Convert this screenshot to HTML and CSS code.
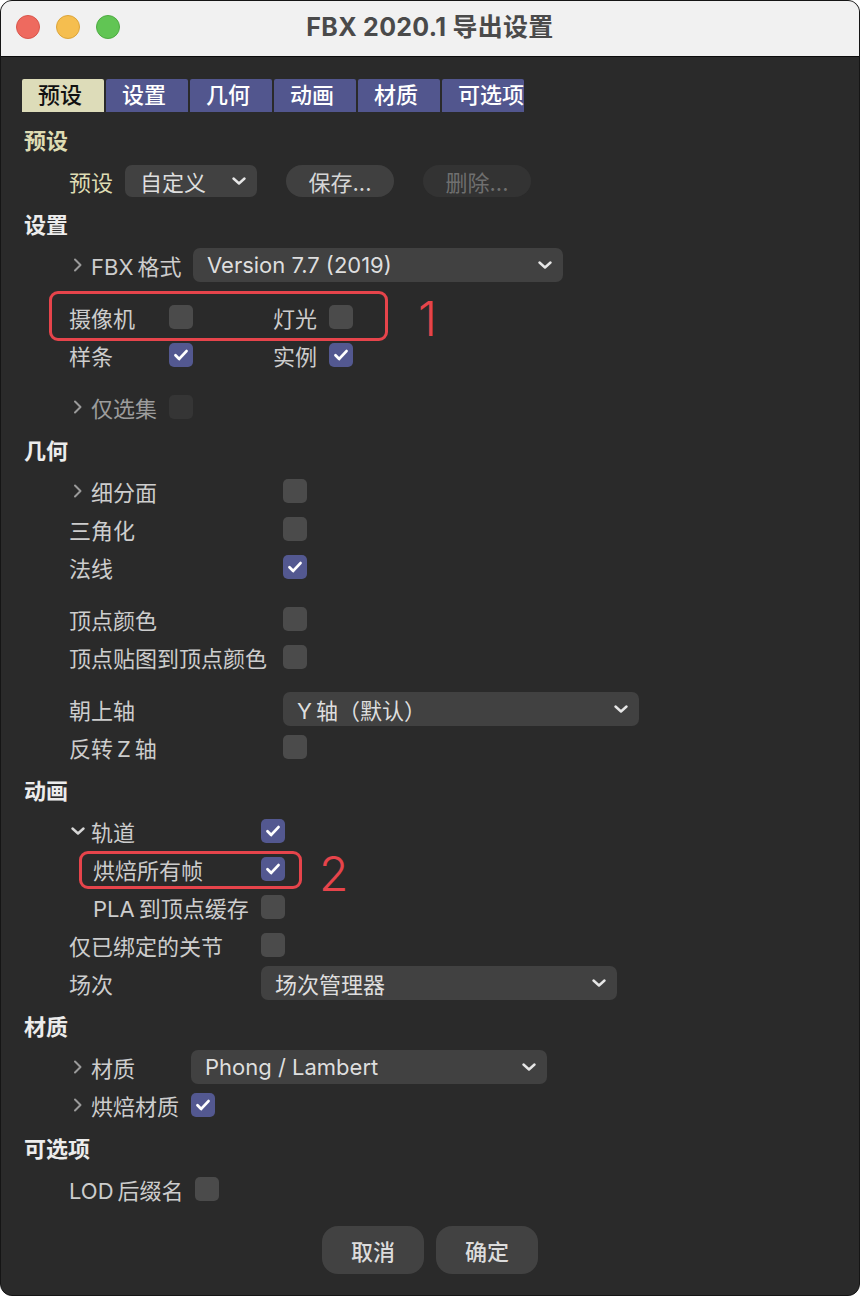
FILE: index.html
```html
<!DOCTYPE html>
<html lang="zh-CN">

<head>
    <meta charset="UTF-8">
    <meta name="viewport" content="width=device-width, initial-scale=1.0">
    <title>FBX 2020.1 导出设置</title>
    <link rel="stylesheet" href="styles.css">
</head>

<body>
    <div class="window">
        <div class="titlebar">
            <div class="lights">
                <span class="light red"></span>
                <span class="light yellow"></span>
                <span class="light green"></span>
            </div>
            <div class="title">FBX 2020.1 导出设置</div>
            <div></div>
        </div>

        <div class="content">
            <div class="tabs">
                <div class="tab active">预设</div>
                <div class="tab">设置</div>
                <div class="tab">几何</div>
                <div class="tab">动画</div>
                <div class="tab">材质</div>
                <div class="tab">可选项</div>
            </div>

            <!-- 预设 -->
            <div class="heading first">预设</div>
            <div class="row">
                <span class="label hl">预设</span>
                <div class="select small">自定义
                    <svg class="down" viewBox="0 0 14 8"><path d="M1.5 1.5l5.5 5 5.5-5"/></svg>
                </div>
                <button class="btn">保存...</button>
                <button class="btn disabled">删除...</button>
            </div>

            <!-- 设置 -->
            <div class="heading">设置</div>
            <div class="row">
                <span class="label w124">
                    <svg class="arrow" viewBox="0 0 10 14"><path d="M2 1.5l5.5 5.5-5.5 5.5"/></svg>FBX&thinsp;格式
                </span>
                <div class="select fbx">Version 7.7 (2019)
                    <svg class="down" viewBox="0 0 14 8"><path d="M1.5 1.5l5.5 5 5.5-5"/></svg>
                </div>
            </div>
            <div class="spacer"></div>
            <div class="row">
                <span class="label w100">摄像机</span>
                <span class="cb"></span>
                <span class="label w56 pair">灯光</span>
                <span class="cb"></span>
                <span class="mark mark1"></span>
                <span class="num num1">1</span>
            </div>
            <div class="row">
                <span class="label w100">样条</span>
                <span class="cb on"><svg viewBox="0 0 24 24"><path d="M6.5 12.3l3.7 3.6 7.3-7.8"/></svg></span>
                <span class="label w56 pair">实例</span>
                <span class="cb on"><svg viewBox="0 0 24 24"><path d="M6.5 12.3l3.7 3.6 7.3-7.8"/></svg></span>
            </div>
            <div class="spacer"></div>
            <div class="row">
                <span class="label w100 dim">
                    <svg class="arrow" viewBox="0 0 10 14"><path d="M2 1.5l5.5 5.5-5.5 5.5"/></svg>仅选集
                </span>
                <span class="cb off"></span>
            </div>

            <!-- 几何 -->
            <div class="heading">几何</div>
            <div class="row">
                <span class="label w214">
                    <svg class="arrow" viewBox="0 0 10 14"><path d="M2 1.5l5.5 5.5-5.5 5.5"/></svg>细分面
                </span>
                <span class="cb"></span>
            </div>
            <div class="row">
                <span class="label w214">三角化</span>
                <span class="cb"></span>
            </div>
            <div class="row">
                <span class="label w214">法线</span>
                <span class="cb on"><svg viewBox="0 0 24 24"><path d="M6.5 12.3l3.7 3.6 7.3-7.8"/></svg></span>
            </div>
            <div class="spacer"></div>
            <div class="row">
                <span class="label w214">顶点颜色</span>
                <span class="cb"></span>
            </div>
            <div class="row">
                <span class="label w214">顶点贴图到顶点颜色</span>
                <span class="cb"></span>
            </div>
            <div class="spacer"></div>
            <div class="row">
                <span class="label w214">朝上轴</span>
                <div class="select wide">Y&thinsp;轴（默认）
                    <svg class="down" viewBox="0 0 14 8"><path d="M1.5 1.5l5.5 5 5.5-5"/></svg>
                </div>
            </div>
            <div class="row">
                <span class="label w214">反转&thinsp;Z&thinsp;轴</span>
                <span class="cb"></span>
            </div>

            <!-- 动画 -->
            <div class="heading">动画</div>
            <div class="row">
                <span class="label w192">
                    <svg class="arrow open" viewBox="0 0 14 8"><path d="M1.5 1.5l5.5 5 5.5-5"/></svg>轨道
                </span>
                <span class="cb on"><svg viewBox="0 0 24 24"><path d="M6.5 12.3l3.7 3.6 7.3-7.8"/></svg></span>
            </div>
            <div class="row">
                <span class="label w192 sub">烘焙所有帧</span>
                <span class="cb on"><svg viewBox="0 0 24 24"><path d="M6.5 12.3l3.7 3.6 7.3-7.8"/></svg></span>
                <span class="mark mark2"></span>
                <span class="num num2">2</span>
            </div>
            <div class="row">
                <span class="label w192 sub">PLA&thinsp;到顶点缓存</span>
                <span class="cb"></span>
            </div>
            <div class="row">
                <span class="label w192">仅已绑定的关节</span>
                <span class="cb"></span>
            </div>
            <div class="row">
                <span class="label w192">场次</span>
                <div class="select wide">场次管理器
                    <svg class="down" viewBox="0 0 14 8"><path d="M1.5 1.5l5.5 5 5.5-5"/></svg>
                </div>
            </div>

            <!-- 材质 -->
            <div class="heading">材质</div>
            <div class="row">
                <span class="label w122">
                    <svg class="arrow" viewBox="0 0 10 14"><path d="M2 1.5l5.5 5.5-5.5 5.5"/></svg>材质
                </span>
                <div class="select wide">Phong / Lambert
                    <svg class="down" viewBox="0 0 14 8"><path d="M1.5 1.5l5.5 5 5.5-5"/></svg>
                </div>
            </div>
            <div class="row">
                <span class="label w122">
                    <svg class="arrow" viewBox="0 0 10 14"><path d="M2 1.5l5.5 5.5-5.5 5.5"/></svg>烘焙材质
                </span>
                <span class="cb on"><svg viewBox="0 0 24 24"><path d="M6.5 12.3l3.7 3.6 7.3-7.8"/></svg></span>
            </div>

            <!-- 可选项 -->
            <div class="heading">可选项</div>
            <div class="row">
                <span class="label w126">LOD&thinsp;后缀名</span>
                <span class="cb"></span>
            </div>

            <div class="footer">
                <button class="btn big">取消</button>
                <button class="btn big">确定</button>
            </div>
        </div>
    </div>
</body>

</html>
```

FILE: styles.css
```css
body {
    margin: 0;
    background: #fff;
    font-family: "Inter", "Noto Sans CJK SC", sans-serif;
}

.window {
    width: 860px;
    height: 1296px;
    box-sizing: border-box;
    border: 1px solid #151515;
    border-radius: 12px;
    overflow: hidden;
    background: #2a2a2a;
}

/* 标题栏 */
.titlebar {
    height: 51px;
    padding-bottom: 4px;
    background: #f1f1f1;
    border-bottom: 1px solid #0c0c0c;
    display: grid;
    grid-template-columns: 1fr auto 1fr;
    align-items: center;
}

.lights {
    display: flex;
    gap: 16px;
    padding-left: 15px;
}

.light {
    width: 24px;
    height: 24px;
    border-radius: 50%;
    box-sizing: border-box;
}

.light.red {
    background: #ee6a5f;
    border: 1px solid #d9564c;
}

.light.yellow {
    background: #f5be4f;
    border: 1px solid #dca53a;
}

.light.green {
    background: #61c554;
    border: 1px solid #4eab42;
}

.title {
    padding-bottom: 4px;
    font-size: 25px;
    font-weight: 700;
    letter-spacing: 0.3px;
    color: #4a4a4a;
}

.content {
    padding: 0 21px;
}

/* 选项卡 */
.tabs {
    display: flex;
    gap: 2px;
    margin-top: 22px;
    margin-bottom: 8px;
}

.tab {
    width: 82px;
    height: 33px;
    line-height: 33px;
    padding-left: 16px;
    box-sizing: border-box;
    background: #52568e;
    color: #fff;
    font-size: 22px;
    font-weight: 500;
    border-radius: 2px 2px 0 0;
}

.tab.active {
    background: #dddcb9;
    color: #111;
}

.heading {
    height: 42px;
    line-height: 42px;
    margin-top: 4px;
    padding-left: 2px;
    font-size: 22px;
    font-weight: 700;
    color: #ececec;
}

.heading.first {
    color: #dedcb3;
}

/* 行 */
.row {
    position: relative;
    display: flex;
    align-items: center;
    height: 38px;
    padding-left: 47px;
}

.spacer {
    height: 14px;
}

.label {
    display: flex;
    align-items: center;
    flex-shrink: 0;
    font-size: 22px;
    color: #cdcdcd;
    white-space: nowrap;
}

.label.hl {
    color: #dedcb3;
}

.label.dim {
    color: #9c9c9c;
}

.label.sub {
    padding-left: 24px;
    box-sizing: border-box;
}

.label.pair {
    margin-left: 80px;
}

.w56 { width: 56px; }
.w100 { width: 100px; }
.w122 { width: 122px; }
.w124 { width: 124px; }
.w126 { width: 126px; }
.w192 { width: 192px; }
.w214 { width: 214px; }

.arrow {
    width: 10px;
    height: 14px;
    margin: 0 8px 0 4px;
    fill: none;
    stroke: #9a9a9a;
    stroke-width: 2;
    stroke-linecap: round;
    stroke-linejoin: round;
}

.arrow.open {
    width: 14px;
    height: 8px;
    margin: 0 6px 0 2px;
    stroke: #d6d6d6;
    stroke-width: 2.4;
}

/* 复选框 */
.cb {
    width: 24px;
    height: 24px;
    border-radius: 5px;
    background: #4b4b4b;
    flex-shrink: 0;
}

.cb.on {
    background: #535890;
}

.cb.off {
    background: #353535;
}

.cb svg {
    display: block;
    width: 24px;
    height: 24px;
    fill: none;
    stroke: #fff;
    stroke-width: 2.8;
    stroke-linecap: round;
    stroke-linejoin: round;
}

/* 下拉框 */
.select {
    display: flex;
    align-items: center;
    justify-content: space-between;
    height: 34px;
    box-sizing: border-box;
    padding: 0 11px 0 14px;
    border-radius: 7px;
    background: #414141;
    color: #dedede;
    font-size: 22px;
    white-space: nowrap;
}

.select.small {
    width: 132px;
    height: 32px;
    margin-left: 12px;
    padding-left: 15px;
}

.select.fbx {
    width: 370px;
}

.select.wide {
    width: 356px;
}

.down {
    width: 14px;
    height: 8px;
    fill: none;
    stroke: #e6e6e6;
    stroke-width: 2.4;
    stroke-linecap: round;
    stroke-linejoin: round;
}

/* 按钮 */
.btn {
    height: 32px;
    width: 108px;
    margin-left: 29px;
    border: 0;
    border-radius: 16px;
    background: #404040;
    color: #d6d6d6;
    font-family: inherit;
    font-size: 22px;
    padding: 0;
}

.btn.disabled {
    background: #333;
    color: #6f6f6f;
}

.footer {
    display: flex;
    justify-content: center;
    gap: 12px;
    margin-top: 18px;
}

.btn.big {
    width: 102px;
    height: 48px;
    margin: 0;
    border-radius: 16px;
    background: #424242;
    color: #dcdcdc;
    font-weight: 500;
}

/* 红色标注 */
.mark {
    position: absolute;
    border: 3px solid #e6444b;
    border-radius: 9px;
    box-sizing: border-box;
}

.mark1 {
    left: 27px;
    top: -7px;
    width: 339px;
    height: 50px;
}

.mark2 {
    left: 57px;
    top: 1px;
    width: 223px;
    height: 38px;
}

.num {
    position: absolute;
    color: #e6444b;
    font-family: "Inter", sans-serif;
    font-weight: 300;
    font-size: 48px;
    line-height: 48px;
}

.num1 {
    left: 396px;
    top: -3px;
}

.num2 {
    left: 297px;
    top: 0;
}
```
